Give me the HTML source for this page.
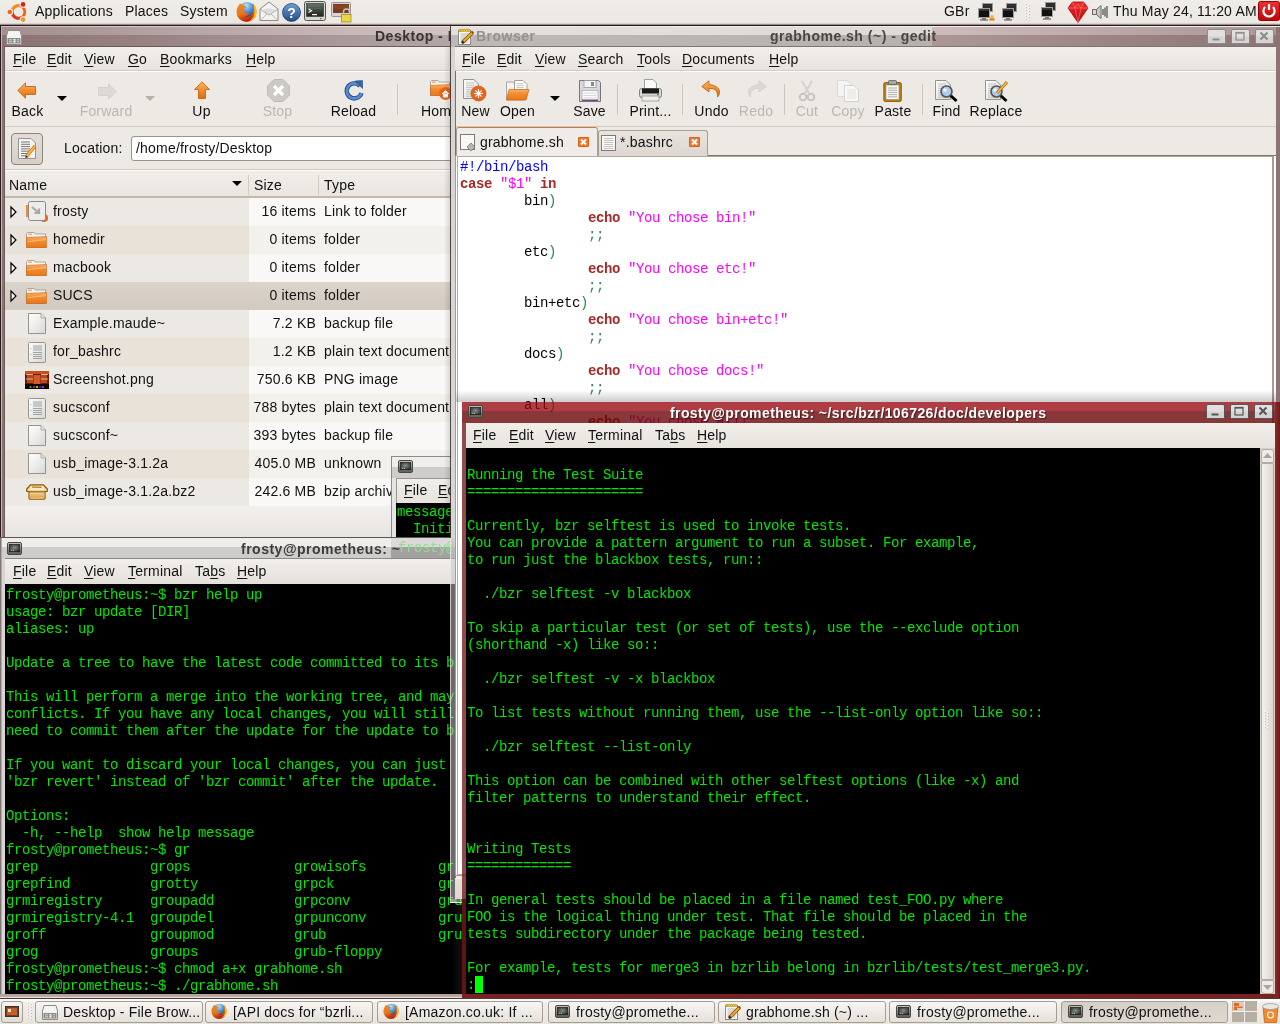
<!DOCTYPE html><html><head><meta charset="utf-8"><style>
*{margin:0;padding:0;box-sizing:border-box}
html,body{width:1280px;height:1024px;overflow:hidden;background:#efebe7;position:relative}
#root{position:absolute;left:0;top:0;width:1280px;height:1024px;will-change:transform}
.ui{font-family:"Liberation Sans",sans-serif;font-size:14px;line-height:17px;color:#111;white-space:pre;letter-spacing:0.2px}
.mono{font-family:"Liberation Mono",monospace;font-size:14px;letter-spacing:-0.4px;line-height:17px;white-space:pre}
u{text-decoration:underline;text-decoration-thickness:1px;text-underline-offset:2px}
</style></head><body><svg width="0" height="0" style="position:absolute">
<defs>
<linearGradient id="gOr" x1="0" y1="0" x2="0" y2="1"><stop offset="0" stop-color="#fbb365"/><stop offset="1" stop-color="#e46a07"/></linearGradient>
<linearGradient id="gFold" x1="0" y1="0" x2="0" y2="1"><stop offset="0" stop-color="#f9b267"/><stop offset=".45" stop-color="#f28a2b"/><stop offset="1" stop-color="#e9781a"/></linearGradient>
<linearGradient id="gGray" x1="0" y1="0" x2="0" y2="1"><stop offset="0" stop-color="#e2dfdb"/><stop offset="1" stop-color="#cfcbc6"/></linearGradient>
<linearGradient id="gPage" x1="0" y1="0" x2="1" y2="1"><stop offset="0" stop-color="#ffffff"/><stop offset="1" stop-color="#d8d8d6"/></linearGradient>
<linearGradient id="gBlue" x1="0" y1="0" x2="0" y2="1"><stop offset="0" stop-color="#729fcf"/><stop offset="1" stop-color="#204a87"/></linearGradient>
<radialGradient id="gFfBlue" cx=".45" cy=".2" r=".85"><stop offset="0" stop-color="#b8e4f8"/><stop offset=".45" stop-color="#4a8ad0"/><stop offset="1" stop-color="#061450"/></radialGradient>
<linearGradient id="gFfOr" x1="0" y1="0" x2=".3" y2="1"><stop offset="0" stop-color="#f08a20"/><stop offset=".6" stop-color="#e6761a"/><stop offset="1" stop-color="#c0200a"/></linearGradient>
<linearGradient id="gRed" x1="0" y1="0" x2="0" y2="1"><stop offset="0" stop-color="#f03030"/><stop offset="1" stop-color="#b80808"/></linearGradient>
<linearGradient id="gBtn" x1="0" y1="0" x2="0" y2="1"><stop offset="0" stop-color="#f6f4f2"/><stop offset="1" stop-color="#dcd8d2"/></linearGradient>
<linearGradient id="gBox" x1="0" y1="0" x2="0" y2="1"><stop offset="0" stop-color="#f3d39a"/><stop offset="1" stop-color="#d99a3c"/></linearGradient>
<linearGradient id="gScr" x1="0" y1="0" x2="0" y2="1"><stop offset="0" stop-color="#5e6b5c"/><stop offset="1" stop-color="#1e221e"/></linearGradient>
<linearGradient id="gBez" x1="0" y1="0" x2="0" y2="1"><stop offset="0" stop-color="#dcd8d2"/><stop offset="1" stop-color="#5a5650"/></linearGradient><radialGradient id="gScr2" cx=".5" cy=".45" r=".6"><stop offset="0" stop-color="#8a928a"/><stop offset="1" stop-color="#262a26"/></radialGradient></defs></svg><div id="root"><div style="position:absolute;left:0px;top:0px;width:1280px;height:24px;background:linear-gradient(#f0ede9,#ebe7e2);border-bottom:1px solid #d6d1ca"></div><svg style="position:absolute;left:7px;top:1px;overflow:visible" width="22" height="22" viewBox="0 0 22 22"><circle cx="11.5" cy="11" r="6.3" fill="none" stroke="#e8641e" stroke-width="2.8"/><path d="M5.2,11 A6.3,6.3 0 0 1 14.6,5.5" fill="none" stroke="#f58a1f" stroke-width="2.8"/><path d="M14.6,16.5 A6.3,6.3 0 0 1 5.2,11" fill="none" stroke="#e0321c" stroke-width="2.8"/><circle cx="2.8" cy="11" r="3.4" fill="#efebe7"/><circle cx="16" cy="3.4" r="3.4" fill="#efebe7"/><circle cx="16" cy="18.6" r="3.4" fill="#efebe7"/><circle cx="2.8" cy="11" r="2.3" fill="#f26522"/><circle cx="16" cy="3.4" r="2.3" fill="#df1f1c"/><circle cx="16" cy="18.6" r="2.3" fill="#f7941e"/></svg><div class="ui" style="position:absolute;left:35px;top:3px;">Applications</div><div class="ui" style="position:absolute;left:125px;top:3px;">Places</div><div class="ui" style="position:absolute;left:180px;top:3px;">System</div><svg style="position:absolute;left:236px;top:1px;overflow:visible" width="21" height="21" viewBox="0 0 21 21"><circle cx="11.2" cy="9.8" r="8.8" fill="url(#gFfBlue)"/><path d="M4,2.2 C2,5 .5,8 .5,11 A10,10 0 0 0 20.5,11 C20.5,7 19,4 17,2.2 C18,6 18,9 16.5,12 C15,15 12,16.5 9,15.5 C11.5,14.5 13.5,13.5 14.5,12.5 C12,13 9,12.2 8,10 C7,8 8.5,6.3 10.5,6.5 C9.8,5.2 8.8,4.6 7.4,4.9 C6.4,3.8 5.4,2.8 4,2.2Z" fill="url(#gFfOr)"/><path d="M17,2.2 C20,5 21,8.5 20.6,12 C20,16 17,19 13.5,20.2 C16.8,17.5 18.6,14.5 18.6,11 C18.6,8 18.2,5 17,2.2Z" fill="#ffc61a"/></svg><svg style="position:absolute;left:259px;top:1px;overflow:visible" width="20" height="21" viewBox="0 0 20 21"><path d="M1,8 L10,1 L19,8 L19,19.5 L1,19.5Z" fill="#f2f2f0" stroke="#8a8a88" stroke-width="1"/><path d="M1,8 L10,14 L19,8" fill="none" stroke="#a8a8a6"/><path d="M1.5,19 L8,13 M18.5,19 L12,13" stroke="#b8b8b6"/><path d="M4,9 C7,7 13,7 16,9 L10,13Z" fill="#dcdcda"/></svg><svg style="position:absolute;left:282px;top:3px;overflow:visible" width="19" height="19" viewBox="0 0 19 19"><circle cx="9.5" cy="9.5" r="9" fill="url(#gBlue)" stroke="#1f3f7a" stroke-width=".8"/><text x="9.5" y="15" text-anchor="middle" font-family="Liberation Sans" font-weight="bold" font-size="14" fill="#fff">?</text></svg><svg style="position:absolute;left:304px;top:1px;overflow:visible" width="22" height="20" viewBox="0 0 22 20"><rect x=".5" y=".5" width="21" height="19" rx="2" fill="#d6d6d2" stroke="#555753"/><rect x="2.5" y="2.5" width="17" height="13" fill="url(#gScr)" stroke="#2e3436" stroke-width=".6"/><path d="M4,3.8h13M4,5.6h13M4,7.4h13" stroke="#7e8b7a" stroke-width=".7" opacity=".6"/><path d="M4.5,8 L7.5,9.8 L4.5,11.6" fill="none" stroke="#fff" stroke-width="1.2"/><path d="M8,13.6h5" stroke="#fff" stroke-width="1.2"/><rect x="16" y="17" width="1.6" height="1.2" fill="#4e9a06"/></svg><svg style="position:absolute;left:331px;top:1px;overflow:visible" width="21" height="21" viewBox="0 0 21 21"><rect x=".5" y="1.5" width="19" height="14" rx="1" fill="#d8d6d2" stroke="#9a9894"/><rect x="2" y="3" width="16" height="9" fill="#7a3a20"/><path d="M2,5h16M2,7h16" stroke="#a85a30" stroke-width=".7"/><path d="M12.5,14 v-3 a3,3 0 0 1 6,0 v3" fill="none" stroke="#c4c4c0" stroke-width="1.4"/><rect x="10.5" y="13.5" width="9.5" height="7.5" fill="#e9d44a" stroke="#a89020" stroke-width=".8"/></svg><div class="ui" style="position:absolute;left:944px;top:3px;">GBr</div><svg style="position:absolute;left:978px;top:3px;overflow:visible" width="17" height="18" viewBox="0 0 17 18"><rect x="4.5" y=".5" width="10" height="8" fill="#2e2e2e" stroke="#9a9a9a"/><rect x=".5" y="5.5" width="11" height="9" fill="#111" stroke="#a0a0a0"/><path d="M1,7h10" stroke="#555" stroke-width="1"/><rect x="4" y="15" width="4" height="1.5" fill="#777"/><rect x="2" y="16.5" width="8" height="1" fill="#444"/><path d="M11,17.5 L14,11.5 L17,17.5Z" fill="#f57900"/><path d="M14,13.5v2" stroke="#fff" stroke-width=".9"/></svg><svg style="position:absolute;left:1002px;top:3px;overflow:visible" width="17" height="18" viewBox="0 0 17 18"><rect x="4.5" y=".5" width="10" height="8" fill="#2e2e2e" stroke="#9a9a9a"/><rect x=".5" y="5.5" width="11" height="9" fill="#111" stroke="#a0a0a0"/><path d="M1,7h10" stroke="#555" stroke-width="1"/><rect x="4" y="15" width="4" height="1.5" fill="#777"/><rect x="2" y="16.5" width="8" height="1" fill="#444"/></svg><div style="position:absolute;left:1025px;top:3px;width:1px;height:1px;background:#fff;box-shadow:1px 1px 0 #c8c2ba"></div><div style="position:absolute;left:1028px;top:4px;width:1px;height:1px;background:#fff;box-shadow:1px 1px 0 #c8c2ba"></div><div style="position:absolute;left:1025px;top:6px;width:1px;height:1px;background:#fff;box-shadow:1px 1px 0 #c8c2ba"></div><div style="position:absolute;left:1028px;top:7px;width:1px;height:1px;background:#fff;box-shadow:1px 1px 0 #c8c2ba"></div><div style="position:absolute;left:1025px;top:9px;width:1px;height:1px;background:#fff;box-shadow:1px 1px 0 #c8c2ba"></div><div style="position:absolute;left:1028px;top:10px;width:1px;height:1px;background:#fff;box-shadow:1px 1px 0 #c8c2ba"></div><div style="position:absolute;left:1025px;top:12px;width:1px;height:1px;background:#fff;box-shadow:1px 1px 0 #c8c2ba"></div><div style="position:absolute;left:1028px;top:13px;width:1px;height:1px;background:#fff;box-shadow:1px 1px 0 #c8c2ba"></div><div style="position:absolute;left:1025px;top:15px;width:1px;height:1px;background:#fff;box-shadow:1px 1px 0 #c8c2ba"></div><div style="position:absolute;left:1028px;top:16px;width:1px;height:1px;background:#fff;box-shadow:1px 1px 0 #c8c2ba"></div><div style="position:absolute;left:1025px;top:18px;width:1px;height:1px;background:#fff;box-shadow:1px 1px 0 #c8c2ba"></div><div style="position:absolute;left:1028px;top:19px;width:1px;height:1px;background:#fff;box-shadow:1px 1px 0 #c8c2ba"></div><svg style="position:absolute;left:1041px;top:2px;overflow:visible" width="17" height="18" viewBox="0 0 17 18"><rect x="4.5" y=".5" width="10" height="8" fill="#2e2e2e" stroke="#9a9a9a"/><rect x=".5" y="5.5" width="11" height="9" fill="#111" stroke="#a0a0a0"/><path d="M1,7h10" stroke="#555" stroke-width="1"/><rect x="4" y="15" width="4" height="1.5" fill="#777"/><rect x="2" y="16.5" width="8" height="1" fill="#444"/></svg><svg style="position:absolute;left:1067px;top:1px;overflow:visible" width="22" height="22" viewBox="0 0 22 22"><path d="M1,7 L5.5,1 L16.5,1 L21,7 L11,21.5Z" fill="url(#gRed)" stroke="#a00" stroke-width=".8"/><path d="M1,7 L21,7 M5.5,1 L8,7 L11,21.5 L14,7 L16.5,1 M8,7 L11,3 L14,7" fill="none" stroke="#ff8080" stroke-width=".6"/></svg><svg style="position:absolute;left:1092px;top:5px;overflow:visible" width="16" height="14" viewBox="0 0 16 14"><rect x=".5" y="4.5" width="4" height="5" fill="#d8d8d6" stroke="#6c6c6a"/><path d="M4.5,4.5 L9,.5 L9,13.5 L4.5,9.5Z" fill="#c8c8c6" stroke="#6c6c6a"/><path d="M11,4v6M13,2.5v9M15,1v12" stroke="#3c3c3a" stroke-width="1.1"/></svg><div class="ui" style="position:absolute;left:1113px;top:3px;">Thu May 24, 11:20 AM</div><svg style="position:absolute;left:1258px;top:1px;overflow:visible" width="22" height="20" viewBox="0 0 22 20"><rect x=".5" y=".5" width="21" height="19" rx="2" fill="url(#gRed)" stroke="#900"/><path d="M7,6 A5.6,5.6 0 1 0 15,6" fill="none" stroke="#fff" stroke-width="2.2"/><path d="M11,3v6" stroke="#fff" stroke-width="2.2"/></svg><div style="position:absolute;left:0px;top:24px;width:452px;height:1px;background:#9a8c88"></div><div style="position:absolute;left:0px;top:25px;width:452px;height:1px;background:#2a1c1c"></div><div style="position:absolute;left:0px;top:26px;width:452px;height:514px;background:#8c7474"></div><div style="position:absolute;left:0px;top:26px;width:1px;height:514px;background:#2a1c1c"></div><div style="position:absolute;left:1px;top:26px;width:451px;height:1px;background:linear-gradient(90deg,#d0c0c0,#e8e0e0)"></div><div style="position:absolute;left:1px;top:27px;width:1px;height:513px;background:#c8b4b4"></div><div style="position:absolute;left:2px;top:27px;width:450px;height:8px;background:linear-gradient(90deg,#a48e8e,#d2c4c4)"></div><div style="position:absolute;left:2px;top:35px;width:450px;height:12px;background:linear-gradient(90deg,#8a7272,#b4a6a6)"></div><svg style="position:absolute;left:6px;top:29px;overflow:visible" width="16" height="16" viewBox="0 0 16 16"><path d="M2,1.5 L14,1.5 L15.5,7 L15.5,15.5 L.5,15.5 L.5,7Z" fill="#f4f4f2" stroke="#8c8c8a"/><rect x="1.5" y="9" width="13" height="5.5" fill="#8a8a88"/><path d="M3,10.8h3M7.5,10.8h2M11,10.8h2M3,12.8h3M7.5,12.8h2M11,12.8h2" stroke="#d8d8d6" stroke-width="1"/><path d="M7.5,10.8h2M7.5,12.8h2" stroke="#fff" stroke-width="1.2"/></svg><div class="ui" style="position:absolute;left:375px;top:28px;font-weight:bold;color:#3c3434;letter-spacing:0.5px">Desktop - File Browser</div><div style="position:absolute;left:4px;top:46px;width:448px;height:494px;background:#edeae6;border-left:1px solid #6c5a58;border-top:1px solid #6c5a58"></div><div style="position:absolute;left:5px;top:47px;width:447px;height:24px;background:linear-gradient(#f2efeb,#e7e3de);border-bottom:1px solid #d3cdc5"></div><div class="ui" style="position:absolute;left:13px;top:51px;"><u>F</u>ile</div><div class="ui" style="position:absolute;left:47px;top:51px;"><u>E</u>dit</div><div class="ui" style="position:absolute;left:84px;top:51px;"><u>V</u>iew</div><div class="ui" style="position:absolute;left:128px;top:51px;"><u>G</u>o</div><div class="ui" style="position:absolute;left:160px;top:51px;"><u>B</u>ookmarks</div><div class="ui" style="position:absolute;left:246px;top:51px;"><u>H</u>elp</div><div style="position:absolute;left:5px;top:71px;width:447px;height:56px;background:#edeae6;border-top:1px solid #fff;border-bottom:1px solid #d0cac2"></div><svg style="position:absolute;left:17px;top:82px;overflow:visible" width="19" height="17" viewBox="0 0 19 17"><path d="M.8,8.5 L8.5,.8 L8.5,4.5 L18.5,4.5 L18.5,12.5 L8.5,12.5 L8.5,16.2Z" fill="url(#gOr)" stroke="#c25a00" stroke-width=".8"/></svg><svg style="position:absolute;left:57px;top:96px;overflow:visible" width="10" height="5" viewBox="0 0 10 5"><path d="M0,0 L10,0 L5,5Z" fill="#000"/></svg><svg style="position:absolute;left:98px;top:83px;overflow:visible" width="19" height="17" viewBox="0 0 19 17"><path d="M18.2,8.5 L10.5,.8 L10.5,4.5 L.5,4.5 L.5,12.5 L10.5,12.5 L10.5,16.2Z" fill="#dcd9d4" stroke="#d0ccc6" stroke-width=".8"/></svg><svg style="position:absolute;left:145px;top:96px;overflow:visible" width="10" height="5" viewBox="0 0 10 5"><path d="M0,0 L10,0 L5,5Z" fill="#b8b0a6"/></svg><svg style="position:absolute;left:194px;top:81px;overflow:visible" width="16" height="18" viewBox="0 0 16 18"><path d="M8,.8 L15.5,8.5 L11.5,8.5 L11.5,17.5 L4.5,17.5 L4.5,8.5 L.5,8.5Z" fill="url(#gOr)" stroke="#c25a00" stroke-width=".8"/></svg><svg style="position:absolute;left:267px;top:79px;overflow:visible" width="23" height="23" viewBox="0 0 23 23"><path d="M7,.5 L16,.5 L22.5,7 L22.5,16 L16,22.5 L7,22.5 L.5,16 L.5,7Z" fill="#cdc9c5" stroke="#bdb9b5"/><path d="M7,7 L16,16 M16,7 L7,16" stroke="#fff" stroke-width="3.2"/></svg><svg style="position:absolute;left:345px;top:80px;overflow:visible" width="19" height="21" viewBox="0 0 19 21"><path d="M15,6 A7.5,7.5 0 1 0 16.5,13" fill="none" stroke="#204a87" stroke-width="4.4"/><path d="M15,6 A7.5,7.5 0 1 0 16.5,13" fill="none" stroke="#5a8ad0" stroke-width="2.6"/><path d="M10,1 L17.5,.5 L17.5,8.5Z" fill="#3465a4" stroke="#204a87" stroke-width=".6"/></svg><svg style="position:absolute;left:430px;top:80px;overflow:visible" width="21" height="16" viewBox="0 0 21 16"><path d="M.5,1.5 L1.5,.5 L8,.5 L9,2 L19.5,2 L19.5,15.5 L.5,15.5Z" fill="#f6f4f0" stroke="#9a948c" stroke-width=".8"/><path d="M2,2.2h4" stroke="#f08a30"/><path d="M.5,5.5 L20.5,4.5 L20.5,15.5 L.5,15.5Z" fill="url(#gFold)" stroke="#c8621a" stroke-width=".6"/></svg><svg style="position:absolute;left:439px;top:87px;overflow:visible" width="13" height="13" viewBox="0 0 13 13"><circle cx="6.5" cy="6.5" r="6.5" fill="#e9641a"/><path d="M3,7 L6.5,3.5 L10,7 M4.5,6.5v3.5h4v-3.5" fill="#fff" stroke="#fff" stroke-width="1"/></svg><div class="ui" style="position:absolute;left:-32.5px;top:103px;width:120px;text-align:center;color:#111">Back</div><div class="ui" style="position:absolute;left:46px;top:103px;width:120px;text-align:center;color:#bbb6b0">Forward</div><div class="ui" style="position:absolute;left:141.5px;top:103px;width:120px;text-align:center;color:#111">Up</div><div class="ui" style="position:absolute;left:217.5px;top:103px;width:120px;text-align:center;color:#bbb6b0">Stop</div><div class="ui" style="position:absolute;left:293.5px;top:103px;width:120px;text-align:center;color:#111">Reload</div><div class="ui" style="position:absolute;left:380px;top:103px;width:120px;text-align:center;color:#111">Home</div><div style="position:absolute;left:397px;top:84px;width:1px;height:31px;background:#cdc6bd"></div><div style="position:absolute;left:5px;top:127px;width:447px;height:43px;background:#edeae6;border-bottom:1px solid #cfc8c0"></div><div style="position:absolute;left:11px;top:133px;width:32px;height:32px;background:linear-gradient(#e2ddd6,#d6d0c8);border:1px solid #8e847a;border-radius:4px"></div><svg style="position:absolute;left:18px;top:138px;overflow:visible" width="19" height="22" viewBox="0 0 19 22"><path d="M.5,.5 L13,.5 L17.5,5 L17.5,20.5 L.5,20.5Z" fill="#f4f4f2" stroke="#8a8a88" stroke-width=".9"/><path d="M3,4.0h9" stroke="#6a6a68" stroke-width=".9"/><path d="M3,6.3h9" stroke="#6a6a68" stroke-width=".9"/><path d="M3,8.6h9" stroke="#6a6a68" stroke-width=".9"/><path d="M3,10.899999999999999h9" stroke="#6a6a68" stroke-width=".9"/><path d="M3,13.2h9" stroke="#6a6a68" stroke-width=".9"/><path d="M3,15.5h6" stroke="#6a6a68" stroke-width=".9"/><path d="M3,17.799999999999997h6" stroke="#6a6a68" stroke-width=".9"/><path d="M8,19 L17,8" stroke="#c26a00" stroke-width="3.4"/><path d="M8,19 L17,8" stroke="#fcb045" stroke-width="2"/><path d="M7,20.5 L8.3,17.5 L9.8,18.8Z" fill="#222"/></svg><div class="ui" style="position:absolute;left:64px;top:140px;">Location:</div><div style="position:absolute;left:131px;top:136px;width:330px;height:25px;background:#fff;border:1px solid #9d9489;border-radius:3px"></div><div class="ui" style="position:absolute;left:136px;top:140px;">/home/frosty/Desktop</div><div style="position:absolute;left:5px;top:170px;width:447px;height:368px;background:linear-gradient(#f9f8f6 0,#f9f8f6 85%,#e8e4e0 100%)"></div><div style="position:absolute;left:5px;top:170px;width:447px;height:1px;background:#fff"></div><div style="position:absolute;left:5px;top:171px;width:447px;height:27px;background:linear-gradient(#f1eeea,#e9e5e0);border-bottom:2px solid #c2b8ae"></div><div class="ui" style="position:absolute;left:9px;top:177px;">Name</div><div class="ui" style="position:absolute;left:254px;top:177px;">Size</div><div class="ui" style="position:absolute;left:324px;top:177px;">Type</div><svg style="position:absolute;left:232px;top:181px;overflow:visible" width="10" height="5" viewBox="0 0 10 5"><path d="M0,0 L10,0 L5,5Z" fill="#000"/></svg><div style="position:absolute;left:248px;top:175px;width:1px;height:20px;background:#d2cbc2"></div><div style="position:absolute;left:318px;top:175px;width:1px;height:20px;background:#d2cbc2"></div><div style="position:absolute;left:5px;top:198px;width:244px;height:28px;background:#ece9e4"></div><div style="position:absolute;left:249px;top:198px;width:203px;height:28px;background:#f9f8f6"></div><svg style="position:absolute;left:10px;top:206px;overflow:visible" width="7" height="12" viewBox="0 0 7 12"><path d="M1,1 L6,6 L1,11Z" fill="#fff" stroke="#000" stroke-width="1.2" stroke-linejoin="miter"/></svg><svg style="position:absolute;left:26px;top:201px;overflow:visible" width="22" height="22" viewBox="0 0 22 22"><circle cx="18" cy="17" r="4" fill="#e9641a"/><rect x="0" y="4" width="4" height="12" fill="#f08a30"/><rect x="2.5" y=".5" width="17" height="19" rx="2" fill="#ececea" stroke="#8a8a88"/><path d="M6,6 L13,12 M13,7.5 L13,12 L8.5,12" fill="none" stroke="#a8a8a6" stroke-width="2.2"/></svg><div class="ui" style="position:absolute;left:53px;top:203px;">frosty</div><div class="ui" style="position:absolute;left:216px;top:203px;width:100px;text-align:right">16 items</div><div class="ui" style="position:absolute;left:324px;top:203px;">Link to folder</div><div style="position:absolute;left:5px;top:226px;width:244px;height:28px;background:#e8e2d9"></div><div style="position:absolute;left:249px;top:226px;width:203px;height:28px;background:#f3f1ec"></div><svg style="position:absolute;left:10px;top:234px;overflow:visible" width="7" height="12" viewBox="0 0 7 12"><path d="M1,1 L6,6 L1,11Z" fill="#fff" stroke="#000" stroke-width="1.2" stroke-linejoin="miter"/></svg><svg style="position:absolute;left:26px;top:232px;overflow:visible" width="21" height="16" viewBox="0 0 21 16"><path d="M.5,1.5 L1.5,.5 L8,.5 L9,2 L19.5,2 L19.5,15.5 L.5,15.5Z" fill="#f6f4f0" stroke="#9a948c" stroke-width=".8"/><path d="M2,2.2h4" stroke="#f08a30" stroke-width="1"/><path d="M.5,5.5 L20.5,4.5 L20.5,15.5 L.5,15.5Z" fill="url(#gFold)" stroke="#c8621a" stroke-width=".6"/><path d="M1.5,10 C7,8.5 14,8.5 20,7.5" stroke="#fbc890" stroke-width=".8" fill="none"/></svg><div class="ui" style="position:absolute;left:53px;top:231px;">homedir</div><div class="ui" style="position:absolute;left:216px;top:231px;width:100px;text-align:right">0 items</div><div class="ui" style="position:absolute;left:324px;top:231px;">folder</div><div style="position:absolute;left:5px;top:254px;width:244px;height:28px;background:#ece9e4"></div><div style="position:absolute;left:249px;top:254px;width:203px;height:28px;background:#f9f8f6"></div><svg style="position:absolute;left:10px;top:262px;overflow:visible" width="7" height="12" viewBox="0 0 7 12"><path d="M1,1 L6,6 L1,11Z" fill="#fff" stroke="#000" stroke-width="1.2" stroke-linejoin="miter"/></svg><svg style="position:absolute;left:26px;top:260px;overflow:visible" width="21" height="16" viewBox="0 0 21 16"><path d="M.5,1.5 L1.5,.5 L8,.5 L9,2 L19.5,2 L19.5,15.5 L.5,15.5Z" fill="#f6f4f0" stroke="#9a948c" stroke-width=".8"/><path d="M2,2.2h4" stroke="#f08a30" stroke-width="1"/><path d="M.5,5.5 L20.5,4.5 L20.5,15.5 L.5,15.5Z" fill="url(#gFold)" stroke="#c8621a" stroke-width=".6"/><path d="M1.5,10 C7,8.5 14,8.5 20,7.5" stroke="#fbc890" stroke-width=".8" fill="none"/></svg><div class="ui" style="position:absolute;left:53px;top:259px;">macbook</div><div class="ui" style="position:absolute;left:216px;top:259px;width:100px;text-align:right">0 items</div><div class="ui" style="position:absolute;left:324px;top:259px;">folder</div><div style="position:absolute;left:5px;top:282px;width:447px;height:28px;background:linear-gradient(#dbd4cb,#d2cac0)"></div><svg style="position:absolute;left:10px;top:290px;overflow:visible" width="7" height="12" viewBox="0 0 7 12"><path d="M1,1 L6,6 L1,11Z" fill="#fff" stroke="#000" stroke-width="1.2" stroke-linejoin="miter"/></svg><svg style="position:absolute;left:26px;top:288px;overflow:visible" width="21" height="16" viewBox="0 0 21 16"><path d="M.5,1.5 L1.5,.5 L8,.5 L9,2 L19.5,2 L19.5,15.5 L.5,15.5Z" fill="#f6f4f0" stroke="#9a948c" stroke-width=".8"/><path d="M2,2.2h4" stroke="#f08a30" stroke-width="1"/><path d="M.5,5.5 L20.5,4.5 L20.5,15.5 L.5,15.5Z" fill="url(#gFold)" stroke="#c8621a" stroke-width=".6"/><path d="M1.5,10 C7,8.5 14,8.5 20,7.5" stroke="#fbc890" stroke-width=".8" fill="none"/></svg><div class="ui" style="position:absolute;left:53px;top:287px;">SUCS</div><div class="ui" style="position:absolute;left:216px;top:287px;width:100px;text-align:right">0 items</div><div class="ui" style="position:absolute;left:324px;top:287px;">folder</div><div style="position:absolute;left:5px;top:310px;width:244px;height:28px;background:#ece9e4"></div><div style="position:absolute;left:249px;top:310px;width:203px;height:28px;background:#f9f8f6"></div><svg style="position:absolute;left:28px;top:313px;overflow:visible" width="18" height="21" viewBox="0 0 18 21"><path d="M.5,.5 L13,.5 L17.5,5 L17.5,20.5 L.5,20.5Z" fill="url(#gPage)" stroke="#8a8a88" stroke-width=".9"/><path d="M13,.5 L13,5 L17.5,5" fill="#e0e0de" stroke="#9a9a98" stroke-width=".7"/></svg><div class="ui" style="position:absolute;left:53px;top:315px;">Example.maude~</div><div class="ui" style="position:absolute;left:216px;top:315px;width:100px;text-align:right">7.2 KB</div><div class="ui" style="position:absolute;left:324px;top:315px;">backup file</div><div style="position:absolute;left:5px;top:338px;width:244px;height:28px;background:#e8e2d9"></div><div style="position:absolute;left:249px;top:338px;width:203px;height:28px;background:#f3f1ec"></div><svg style="position:absolute;left:28px;top:342px;overflow:visible" width="18" height="21" viewBox="0 0 18 21"><rect x=".5" y=".5" width="17" height="20" rx="1" fill="url(#gPage)" stroke="#8a8a88" stroke-width=".9"/><path d="M5,4h9" stroke="#a0a09e" stroke-width="1"/><path d="M5,6h9" stroke="#a0a09e" stroke-width="1"/><path d="M5,8h9" stroke="#a0a09e" stroke-width="1"/><path d="M5,10.5h9" stroke="#a0a09e" stroke-width="1"/><path d="M5,12.5h9" stroke="#a0a09e" stroke-width="1"/><path d="M5,14.5h9" stroke="#a0a09e" stroke-width="1"/><path d="M5,16.5h9" stroke="#a0a09e" stroke-width="1"/><rect x="2.5" y="6" width="1" height="1" fill="#b0b0ae"/><rect x="2.5" y="12" width="1" height="1" fill="#b0b0ae"/></svg><div class="ui" style="position:absolute;left:53px;top:343px;">for_bashrc</div><div class="ui" style="position:absolute;left:216px;top:343px;width:100px;text-align:right">1.2 KB</div><div class="ui" style="position:absolute;left:324px;top:343px;">plain text document</div><div style="position:absolute;left:5px;top:366px;width:244px;height:28px;background:#ece9e4"></div><div style="position:absolute;left:249px;top:366px;width:203px;height:28px;background:#f9f8f6"></div><svg style="position:absolute;left:25px;top:371px;overflow:visible" width="24" height="18" viewBox="0 0 24 18"><rect x="0" y="0" width="24" height="18" fill="#6a1a08"/><rect x="0" y="0" width="24" height="3" fill="#c85020"/><rect x="2" y="3" width="6" height="9" fill="#b84818"/><rect x="16" y="3" width="6" height="9" fill="#b84818"/><path d="M1,3.5h7M16,3.5h7M1,8h7M16,8h7" stroke="#f0d0b0" stroke-width=".8"/><rect x="8.5" y="4" width="7" height="9" fill="#d05a28"/><rect x="0" y="13" width="24" height="5" fill="#100400"/><circle cx="5.5" cy="16" r="1" fill="#3c3"/><circle cx="9" cy="16" r="1" fill="#c3c"/><circle cx="12" cy="16" r="1" fill="#ee3"/><circle cx="15" cy="16" r="1" fill="#33e"/><circle cx="18" cy="16" r="1" fill="#e3e"/></svg><div class="ui" style="position:absolute;left:53px;top:371px;">Screenshot.png</div><div class="ui" style="position:absolute;left:216px;top:371px;width:100px;text-align:right">750.6 KB</div><div class="ui" style="position:absolute;left:324px;top:371px;">PNG image</div><div style="position:absolute;left:5px;top:394px;width:244px;height:28px;background:#e8e2d9"></div><div style="position:absolute;left:249px;top:394px;width:203px;height:28px;background:#f3f1ec"></div><svg style="position:absolute;left:28px;top:398px;overflow:visible" width="18" height="21" viewBox="0 0 18 21"><rect x=".5" y=".5" width="17" height="20" rx="1" fill="url(#gPage)" stroke="#8a8a88" stroke-width=".9"/><path d="M5,4h9" stroke="#a0a09e" stroke-width="1"/><path d="M5,6h9" stroke="#a0a09e" stroke-width="1"/><path d="M5,8h9" stroke="#a0a09e" stroke-width="1"/><path d="M5,10.5h9" stroke="#a0a09e" stroke-width="1"/><path d="M5,12.5h9" stroke="#a0a09e" stroke-width="1"/><path d="M5,14.5h9" stroke="#a0a09e" stroke-width="1"/><path d="M5,16.5h9" stroke="#a0a09e" stroke-width="1"/><rect x="2.5" y="6" width="1" height="1" fill="#b0b0ae"/><rect x="2.5" y="12" width="1" height="1" fill="#b0b0ae"/></svg><div class="ui" style="position:absolute;left:53px;top:399px;">sucsconf</div><div class="ui" style="position:absolute;left:216px;top:399px;width:100px;text-align:right">788 bytes</div><div class="ui" style="position:absolute;left:324px;top:399px;">plain text document</div><div style="position:absolute;left:5px;top:422px;width:244px;height:28px;background:#ece9e4"></div><div style="position:absolute;left:249px;top:422px;width:203px;height:28px;background:#f9f8f6"></div><svg style="position:absolute;left:28px;top:425px;overflow:visible" width="18" height="21" viewBox="0 0 18 21"><path d="M.5,.5 L13,.5 L17.5,5 L17.5,20.5 L.5,20.5Z" fill="url(#gPage)" stroke="#8a8a88" stroke-width=".9"/><path d="M13,.5 L13,5 L17.5,5" fill="#e0e0de" stroke="#9a9a98" stroke-width=".7"/></svg><div class="ui" style="position:absolute;left:53px;top:427px;">sucsconf~</div><div class="ui" style="position:absolute;left:216px;top:427px;width:100px;text-align:right">393 bytes</div><div class="ui" style="position:absolute;left:324px;top:427px;">backup file</div><div style="position:absolute;left:5px;top:450px;width:244px;height:28px;background:#e8e2d9"></div><div style="position:absolute;left:249px;top:450px;width:203px;height:28px;background:#f3f1ec"></div><svg style="position:absolute;left:28px;top:453px;overflow:visible" width="18" height="21" viewBox="0 0 18 21"><path d="M.5,.5 L13,.5 L17.5,5 L17.5,20.5 L.5,20.5Z" fill="url(#gPage)" stroke="#8a8a88" stroke-width=".9"/><path d="M13,.5 L13,5 L17.5,5" fill="#e0e0de" stroke="#9a9a98" stroke-width=".7"/></svg><div class="ui" style="position:absolute;left:53px;top:455px;">usb_image-3.1.2a</div><div class="ui" style="position:absolute;left:216px;top:455px;width:100px;text-align:right">405.0 MB</div><div class="ui" style="position:absolute;left:324px;top:455px;">unknown</div><div style="position:absolute;left:5px;top:478px;width:244px;height:28px;background:#ece9e4"></div><div style="position:absolute;left:249px;top:478px;width:203px;height:28px;background:#f9f8f6"></div><svg style="position:absolute;left:26px;top:484px;overflow:visible" width="22" height="17" viewBox="0 0 22 17"><path d="M4.5,.8 L17.5,.8 L21.3,5 L21.3,7.5 L19,7.5 L19,14.3 Q19,15.2 18,15.2 L4,15.2 Q3,15.2 3,14.3 L3,7.5 L.7,7.5 L.7,5Z" fill="#f2d39e" stroke="#8f5902" stroke-width="1.2" stroke-linejoin="round"/><path d="M5,2.3 L17,2.3 L18.5,6 L3.5,6Z" fill="#fbebc8"/><path d="M6,3.2 Q11,2.8 15.5,3.4" stroke="#b8741a" stroke-width="1.3" fill="none"/><rect x="3.7" y="8.2" width="14.6" height="6.3" fill="url(#gBox)"/><path d="M3,7.8 L19,7.8" stroke="#8f5902" stroke-width="1.1"/><path d="M4.5,14h13" stroke="#f8e4c0" stroke-width=".7"/></svg><div class="ui" style="position:absolute;left:53px;top:483px;">usb_image-3.1.2a.bz2</div><div class="ui" style="position:absolute;left:216px;top:483px;width:100px;text-align:right">242.6 MB</div><div class="ui" style="position:absolute;left:324px;top:483px;">bzip archive</div><div style="position:absolute;left:5px;top:537px;width:447px;height:3px;background:#cfc8c0"></div><div style="position:absolute;left:391px;top:456px;width:61px;height:82px;background:#e6e4e2;border-left:1px solid #8a8a88;border-top:1px solid #8a8a88"></div><div style="position:absolute;left:392px;top:457px;width:60px;height:10px;background:#f0eeec"></div><div style="position:absolute;left:392px;top:467px;width:60px;height:11px;background:#cfcdcb"></div><svg style="position:absolute;left:398px;top:460px;overflow:visible" width="15" height="13" viewBox="0 0 15 13"><rect x=".5" y=".5" width="14" height="12" rx="1.5" fill="url(#gBez)" stroke="#4a4844"/><rect x="2.2" y="2.2" width="10.6" height="7.6" fill="url(#gScr2)" stroke="#141614" stroke-width=".6"/><path d="M3.5,8.2h2M6,8.5h1" stroke="#c8ccc8" stroke-width=".9"/></svg><div style="position:absolute;left:396px;top:478px;width:56px;height:25px;background:linear-gradient(#f2efeb,#e6e2dc);border-left:1px solid #9a9692;border-top:1px solid #9a9692"></div><div class="ui" style="position:absolute;left:404px;top:482px;"><u>F</u>ile</div><div class="ui" style="position:absolute;left:438px;top:482px;"><u>E</u>dit</div><div style="position:absolute;left:396px;top:503px;width:56px;height:35px;background:#000"></div><div class="mono" style="position:absolute;left:397px;top:504px;color:#00e800">message
  Initi</div><div style="position:absolute;left:0px;top:537px;width:462px;height:1px;background:#5a5654"></div><div style="position:absolute;left:0px;top:538px;width:462px;height:460px;background:#d8d6d4"></div><div style="position:absolute;left:0px;top:538px;width:2px;height:460px;background:linear-gradient(90deg,#6c5c5a,#c8c0bc)"></div><div style="position:absolute;left:2px;top:538px;width:460px;height:9px;background:#efedeb"></div><div style="position:absolute;left:2px;top:547px;width:460px;height:11px;background:#cfcdcb"></div><div style="position:absolute;left:391px;top:538px;width:71px;height:9px;background:#dcdad8"></div><div style="position:absolute;left:391px;top:547px;width:71px;height:11px;background:#a4a2a0"></div><div class="mono" style="position:absolute;left:398px;top:540px;color:#90dc90">frosty@</div><svg style="position:absolute;left:7px;top:542px;overflow:visible" width="15" height="13" viewBox="0 0 15 13"><rect x=".5" y=".5" width="14" height="12" rx="1.5" fill="url(#gBez)" stroke="#4a4844"/><rect x="2.2" y="2.2" width="10.6" height="7.6" fill="url(#gScr2)" stroke="#141614" stroke-width=".6"/><path d="M3.5,8.2h2M6,8.5h1" stroke="#c8ccc8" stroke-width=".9"/></svg><div class="ui" style="position:absolute;left:241px;top:541px;font-weight:bold;color:#3c3c3c;letter-spacing:0.5px">frosty@prometheus: ~</div><div style="position:absolute;left:5px;top:558px;width:457px;height:1px;background:#8a8886"></div><div style="position:absolute;left:5px;top:559px;width:457px;height:25px;background:linear-gradient(#f2efeb,#e4e0da)"></div><div class="ui" style="position:absolute;left:13px;top:563px;"><u>F</u>ile</div><div class="ui" style="position:absolute;left:47px;top:563px;"><u>E</u>dit</div><div class="ui" style="position:absolute;left:84px;top:563px;"><u>V</u>iew</div><div class="ui" style="position:absolute;left:128px;top:563px;"><u>T</u>erminal</div><div class="ui" style="position:absolute;left:195px;top:563px;">Ta<u>b</u>s</div><div class="ui" style="position:absolute;left:237px;top:563px;"><u>H</u>elp</div><div style="position:absolute;left:5px;top:584px;width:461px;height:410px;background:#000"></div><div style="position:absolute;left:452px;top:903px;width:10px;height:91px;background:linear-gradient(90deg,rgba(30,30,30,0),rgba(30,30,30,.6))"></div><div class="mono" style="position:absolute;left:6px;top:587px;width:456px;height:408px;overflow:hidden;color:#00e800">frosty@prometheus:~$ bzr help up
usage: bzr update [DIR]
aliases: up

Update a tree to have the latest code committed to its branch.

This will perform a merge into the working tree, and may generate
conflicts. If you have any local changes, you will still
need to commit them after the update for the update to be

If you want to discard your local changes, you can just do a
&#x27;bzr revert&#x27; instead of &#x27;bzr commit&#x27; after the update.

Options:
  -h, --help  show help message
frosty@prometheus:~$ gr
grep              grops             growisofs         grub-install
grepfind          grotty            grpck             grub-md5
grmiregistry      groupadd          grpconv           grub-setup
grmiregistry-4.1  groupdel          grpunconv         grub-terminfo
groff             groupmod          grub              grub-uninstall
grog              groups            grub-floppy
frosty@prometheus:~$ chmod a+x grabhome.sh
frosty@prometheus:~$ ./grabhome.sh</div><div style="position:absolute;left:0px;top:994px;width:462px;height:3px;background:linear-gradient(#b09890,#c4b0a8)"></div><div style="position:absolute;left:0px;top:997px;width:462px;height:1px;background:#e4dcd8"></div><div style="position:absolute;left:450px;top:24px;width:830px;height:1px;background:#9a8c88"></div><div style="position:absolute;left:450px;top:25px;width:830px;height:1px;background:#2a1c1c"></div><div style="position:absolute;left:450px;top:26px;width:1px;height:512px;background:rgba(60,52,50,0.9)"></div><div style="position:absolute;left:450px;top:538px;width:1px;height:365px;background:rgba(230,230,230,0.85)"></div><div style="position:absolute;left:444px;top:47px;width:6px;height:491px;background:linear-gradient(90deg,rgba(0,0,0,0),rgba(0,0,0,0.12))"></div><div style="position:absolute;left:451px;top:26px;width:4px;height:512px;background:#d8d6d4"></div><div style="position:absolute;left:451px;top:538px;width:4px;height:365px;background:rgba(200,196,194,0.55)"></div><div style="position:absolute;left:450px;top:899px;width:12px;height:4px;background:rgba(200,196,194,0.55)"></div><div style="position:absolute;left:450px;top:902px;width:12px;height:1px;background:rgba(255,255,255,0.8)"></div><div style="position:absolute;left:451px;top:26px;width:829px;height:1px;background:#f0eceb"></div><div style="position:absolute;left:451px;top:27px;width:829px;height:8px;background:linear-gradient(90deg,#e2dfdc 0,#dedad7 58%,#cdbcba 58%,#ab9595 100%)"></div><div style="position:absolute;left:451px;top:35px;width:829px;height:12px;background:linear-gradient(90deg,#bdb9b6 0,#b6b1ae 58%,#ab9896 58%,#8c7474 100%)"></div><svg style="position:absolute;left:457px;top:28px;overflow:visible" width="16" height="17" viewBox="0 0 16 17"><rect x="1.5" y="2.5" width="12" height="14" fill="#fbfbf9" stroke="#8a8a88"/><circle cx="3.0" cy="2.5" r="1.2" fill="#f4d040" stroke="#a88010" stroke-width=".6"/><circle cx="5.2" cy="2.5" r="1.2" fill="#f4d040" stroke="#a88010" stroke-width=".6"/><circle cx="7.4" cy="2.5" r="1.2" fill="#f4d040" stroke="#a88010" stroke-width=".6"/><circle cx="9.600000000000001" cy="2.5" r="1.2" fill="#f4d040" stroke="#a88010" stroke-width=".6"/><circle cx="11.8" cy="2.5" r="1.2" fill="#f4d040" stroke="#a88010" stroke-width=".6"/><path d="M3.5,6h8" stroke="#9a9a98" stroke-width=".7"/><path d="M3.5,8h8" stroke="#9a9a98" stroke-width=".7"/><path d="M3.5,10h8" stroke="#9a9a98" stroke-width=".7"/><path d="M3.5,12h8" stroke="#9a9a98" stroke-width=".7"/><path d="M3.5,14h8" stroke="#9a9a98" stroke-width=".7"/><path d="M6,14 L15,5" stroke="#7a4a08" stroke-width="3.6" stroke-linecap="round"/><path d="M6.3,13.7 L15,5" stroke="#f5a828" stroke-width="2.2"/><path d="M4.6,15.6 L5.6,12.6 L7.5,14.4Z" fill="#222"/></svg><div class="ui" style="position:absolute;left:476px;top:28px;font-weight:bold;color:#94908c;letter-spacing:0.5px">Browser</div><div class="ui" style="position:absolute;left:770px;top:28px;font-weight:bold;color:#4a4644;letter-spacing:0.5px">grabhome.sh (~) - gedit</div><svg style="position:absolute;left:1207px;top:29px;overflow:visible" width="19" height="15" viewBox="0 0 19 15"><rect x=".5" y=".5" width="18" height="14" rx="1.5" fill="#e2e0de" stroke="#8c8a88"/><rect x="1" y="7.5" width="17" height="6.5" fill="#d6d4d2"/><rect x="5.5" y="9.5" width="7" height="2" fill="#8a8a8a"/></svg><svg style="position:absolute;left:1231px;top:29px;overflow:visible" width="19" height="15" viewBox="0 0 19 15"><rect x=".5" y=".5" width="18" height="14" rx="1.5" fill="#e2e0de" stroke="#8c8a88"/><rect x="1" y="7.5" width="17" height="6.5" fill="#d6d4d2"/><rect x="5" y="3.5" width="8" height="7.5" fill="none" stroke="#8a8a8a" stroke-width="1.2"/><rect x="5" y="3" width="8" height="1.6" fill="#8a8a8a"/></svg><svg style="position:absolute;left:1255px;top:29px;overflow:visible" width="19" height="15" viewBox="0 0 19 15"><rect x=".5" y=".5" width="18" height="14" rx="1.5" fill="#e2e0de" stroke="#8c8a88"/><rect x="1" y="7.5" width="17" height="6.5" fill="#d6d4d2"/><path d="M5.5,3.5 L12.5,10.5 M12.5,3.5 L5.5,10.5" stroke="#8a8a8a" stroke-width="2"/></svg><div style="position:absolute;left:1276px;top:27px;width:4px;height:380px;background:#8c7474"></div><div style="position:absolute;left:455px;top:46px;width:821px;height:853px;background:#edeae6;border-left:1px solid #7c7066;border-top:1px solid #7c7472"></div><div style="position:absolute;left:455px;top:878px;width:821px;height:21px;background:linear-gradient(#e4e0da,#dcd7d0);border-top:1px solid #f8f6f4"></div><div style="position:absolute;left:455px;top:47px;width:821px;height:24px;background:linear-gradient(#f2efeb,#e7e3de);border-bottom:1px solid #d3cdc5"></div><div class="ui" style="position:absolute;left:462px;top:51px;"><u>F</u>ile</div><div class="ui" style="position:absolute;left:497px;top:51px;"><u>E</u>dit</div><div class="ui" style="position:absolute;left:535px;top:51px;"><u>V</u>iew</div><div class="ui" style="position:absolute;left:578px;top:51px;"><u>S</u>earch</div><div class="ui" style="position:absolute;left:637px;top:51px;"><u>T</u>ools</div><div class="ui" style="position:absolute;left:682px;top:51px;"><u>D</u>ocuments</div><div class="ui" style="position:absolute;left:769px;top:51px;"><u>H</u>elp</div><div style="position:absolute;left:456px;top:71px;width:820px;height:56px;background:#edeae6;border-top:1px solid #fff;border-bottom:1px solid #d0cac2"></div><svg style="position:absolute;left:463px;top:79px;overflow:visible" width="23" height="22" viewBox="0 0 23 22"><path d="M.5,.5 L11,.5 L15.5,5 L15.5,19.5 L.5,19.5Z" fill="url(#gPage)" stroke="#8a8a88" stroke-width=".9"/><path d="M3,4.0h8" stroke="#b0b0ae" stroke-width=".7"/><path d="M3,6.2h8" stroke="#b0b0ae" stroke-width=".7"/><path d="M3,8.4h8" stroke="#b0b0ae" stroke-width=".7"/><path d="M3,10.600000000000001h8" stroke="#b0b0ae" stroke-width=".7"/><path d="M3,12.8h8" stroke="#b0b0ae" stroke-width=".7"/><path d="M3,15.0h8" stroke="#b0b0ae" stroke-width=".7"/><path d="M3,17.200000000000003h8" stroke="#b0b0ae" stroke-width=".7"/><circle cx="15.5" cy="14.5" r="7.5" fill="#e9641a" stroke="#c04a08" stroke-width=".6"/><path d="M15.5,10v9M11,14.5h9M12.3,11.3l6.4,6.4M18.7,11.3l-6.4,6.4" stroke="#fff" stroke-width="1.1"/><circle cx="15.5" cy="14.5" r="2" fill="#fff"/></svg><svg style="position:absolute;left:506px;top:80px;overflow:visible" width="24" height="21" viewBox="0 0 24 21"><path d="M.5,2 L7,2 L8,3.5 L18,3.5 L18,20 L.5,20Z" fill="#f6f4f0" stroke="#9a948c" stroke-width=".8"/><path d="M8.5,.5 L17,.5 L21,4.5 L21,14 L8.5,14Z" fill="#fafaf8" stroke="#8a8a88" stroke-width=".8"/><path d="M10.5,3.5h7" stroke="#b0b0ae" stroke-width=".7"/><path d="M10.5,5.5h7" stroke="#b0b0ae" stroke-width=".7"/><path d="M10.5,7.5h7" stroke="#b0b0ae" stroke-width=".7"/><path d="M10.5,9.5h7" stroke="#b0b0ae" stroke-width=".7"/><path d="M.5,20 L3,9.5 L23,9.5 L20,20Z" fill="url(#gFold)" stroke="#c8621a" stroke-width=".7"/></svg><svg style="position:absolute;left:550px;top:96px;overflow:visible" width="10" height="5" viewBox="0 0 10 5"><path d="M0,0 L10,0 L5,5Z" fill="#000"/></svg><svg style="position:absolute;left:579px;top:80px;overflow:visible" width="22" height="22" viewBox="0 0 22 22"><path d="M.5,.5 L19.5,.5 L21.5,2.5 L21.5,21.5 L.5,21.5Z" fill="#d8d8de" stroke="#6a6a70" stroke-width=".9"/><rect x="5" y=".5" width="12" height="7" fill="#f2f2f4" stroke="#8a8a90" stroke-width=".7"/><rect x="12" y="2" width="3" height="4" fill="#8a8a90"/><rect x="3" y="10.5" width="16" height="10" fill="#fafafa" stroke="#9a9aa0" stroke-width=".6"/><path d="M4.5,13h13M4.5,15.5h13M4.5,18h13" stroke="#c8c8cc" stroke-width=".7"/><rect x="3" y="19.5" width="16" height="1.6" fill="#75507b"/></svg><svg style="position:absolute;left:639px;top:79px;overflow:visible" width="23" height="23" viewBox="0 0 23 23"><path d="M5.5,.5 L14,.5 L17.5,4 L17.5,10 L5.5,10Z" fill="#fafaf8" stroke="#8a8a88" stroke-width=".8"/><rect x=".5" y="9.5" width="22" height="9" rx="2" fill="#d8d8d6" stroke="#6a6a68" stroke-width=".8"/><rect x="3" y="9.5" width="17" height="5" fill="#1a1a1a"/><rect x="3" y="17" width="17" height="5" fill="#eeeeec" stroke="#8a8a88" stroke-width=".7"/><rect x="18" y="15" width="2" height="1.2" fill="#4e9a06"/></svg><svg style="position:absolute;left:701px;top:80px;overflow:visible" width="21" height="20" viewBox="0 0 21 20"><path d="M8,.8 L.8,6.5 L8,12 L8,8.5 C13,8 17,10 16.5,17 C19.5,14 21,6 8,4.5Z" fill="url(#gOr)" stroke="#c25a00" stroke-width=".8"/></svg><svg style="position:absolute;left:746px;top:80px;overflow:visible" width="21" height="20" viewBox="0 0 21 20"><path d="M13,.8 L20.2,6.5 L13,12 L13,8.5 C8,8 4,10 4.5,17 C1.5,14 0,6 13,4.5Z" fill="#dcd9d4" stroke="#d0ccc6" stroke-width=".8"/></svg><svg style="position:absolute;left:798px;top:80px;overflow:visible" width="18" height="21" viewBox="0 0 18 21"><path d="M4,1 L11,13 M14,1 L7,13" stroke="#d4d2ce" stroke-width="2"/><circle cx="5" cy="17" r="3.3" fill="none" stroke="#c8c4c0" stroke-width="2"/><circle cx="13" cy="17" r="3.3" fill="none" stroke="#c8c4c0" stroke-width="2"/></svg><svg style="position:absolute;left:837px;top:80px;overflow:visible" width="22" height="22" viewBox="0 0 22 22"><path d="M.5,.5 L10,.5 L13.5,4 L13.5,16.5 L.5,16.5Z" fill="#f4f4f2" stroke="#d8d6d2" stroke-width=".9"/><path d="M7.5,5.5 L17,5.5 L21.5,10 L21.5,21.5 L7.5,21.5Z" fill="#f8f8f6" stroke="#d0ceca" stroke-width=".9"/><path d="M10,10h9" stroke="#dcdad6" stroke-width=".7"/><path d="M10,12h9" stroke="#dcdad6" stroke-width=".7"/><path d="M10,14h9" stroke="#dcdad6" stroke-width=".7"/><path d="M10,16h9" stroke="#dcdad6" stroke-width=".7"/><path d="M10,18h9" stroke="#dcdad6" stroke-width=".7"/></svg><svg style="position:absolute;left:883px;top:80px;overflow:visible" width="19" height="22" viewBox="0 0 19 22"><rect x=".8" y="2.5" width="17.5" height="19" rx="1.5" fill="#c17d11" stroke="#8f5902" stroke-width=".9"/><rect x="3" y="5" width="13" height="14.5" fill="#f8f8f6" stroke="#8a8a88" stroke-width=".6"/><path d="M5,8.0h9" stroke="#9a9a98" stroke-width=".8"/><path d="M5,10.2h9" stroke="#9a9a98" stroke-width=".8"/><path d="M5,12.4h9" stroke="#9a9a98" stroke-width=".8"/><path d="M5,14.600000000000001h9" stroke="#9a9a98" stroke-width=".8"/><path d="M5,16.8h9" stroke="#9a9a98" stroke-width=".8"/><rect x="5.5" y=".5" width="8" height="4" rx="1" fill="#a8a8a6" stroke="#555" stroke-width=".7"/></svg><svg style="position:absolute;left:935px;top:80px;overflow:visible" width="23" height="22" viewBox="0 0 23 22"><path d="M.5,.5 L11,.5 L15.5,5 L15.5,19.5 L.5,19.5Z" fill="url(#gPage)" stroke="#8a8a88" stroke-width=".9"/><path d="M3,4.0h8" stroke="#b0b0ae" stroke-width=".7"/><path d="M3,6.2h8" stroke="#b0b0ae" stroke-width=".7"/><path d="M3,8.4h8" stroke="#b0b0ae" stroke-width=".7"/><path d="M3,10.600000000000001h8" stroke="#b0b0ae" stroke-width=".7"/><path d="M3,12.8h8" stroke="#b0b0ae" stroke-width=".7"/><path d="M3,15.0h8" stroke="#b0b0ae" stroke-width=".7"/><path d="M3,17.200000000000003h8" stroke="#b0b0ae" stroke-width=".7"/><path d="M15,15 L21.5,21" stroke="#000" stroke-width="3"/><circle cx="11.5" cy="11.5" r="5.5" fill="#a8c8ea" fill-opacity=".85" stroke="#555" stroke-width="1.6"/><circle cx="10" cy="10" r="1.8" fill="#fff" fill-opacity=".8"/></svg><svg style="position:absolute;left:985px;top:80px;overflow:visible" width="23" height="22" viewBox="0 0 23 22"><path d="M.5,.5 L11,.5 L15.5,5 L15.5,19.5 L.5,19.5Z" fill="url(#gPage)" stroke="#8a8a88" stroke-width=".9"/><path d="M3,4.0h8" stroke="#b0b0ae" stroke-width=".7"/><path d="M3,6.2h8" stroke="#b0b0ae" stroke-width=".7"/><path d="M3,8.4h8" stroke="#b0b0ae" stroke-width=".7"/><path d="M3,10.600000000000001h8" stroke="#b0b0ae" stroke-width=".7"/><path d="M3,12.8h8" stroke="#b0b0ae" stroke-width=".7"/><path d="M3,15.0h8" stroke="#b0b0ae" stroke-width=".7"/><path d="M3,17.200000000000003h8" stroke="#b0b0ae" stroke-width=".7"/><path d="M15,15 L21.5,21" stroke="#000" stroke-width="3"/><circle cx="11.5" cy="11.5" r="5.5" fill="#a8c8ea" fill-opacity=".85" stroke="#555" stroke-width="1.6"/><circle cx="10" cy="10" r="1.8" fill="#fff" fill-opacity=".8"/><path d="M12,13 L22,2" stroke="#9a6a10" stroke-width="3"/><path d="M12,13 L22,2" stroke="#f6b840" stroke-width="1.8"/></svg><div class="ui" style="position:absolute;left:415.5px;top:103px;width:120px;text-align:center;color:#111">New</div><div class="ui" style="position:absolute;left:457.5px;top:103px;width:120px;text-align:center;color:#111">Open</div><div class="ui" style="position:absolute;left:529.5px;top:103px;width:120px;text-align:center;color:#111">Save</div><div class="ui" style="position:absolute;left:590.5px;top:103px;width:120px;text-align:center;color:#111">Print...</div><div class="ui" style="position:absolute;left:651.5px;top:103px;width:120px;text-align:center;color:#111">Undo</div><div class="ui" style="position:absolute;left:696px;top:103px;width:120px;text-align:center;color:#bbb6b0">Redo</div><div class="ui" style="position:absolute;left:747px;top:103px;width:120px;text-align:center;color:#bbb6b0">Cut</div><div class="ui" style="position:absolute;left:788px;top:103px;width:120px;text-align:center;color:#bbb6b0">Copy</div><div class="ui" style="position:absolute;left:833px;top:103px;width:120px;text-align:center;color:#111">Paste</div><div class="ui" style="position:absolute;left:886.5px;top:103px;width:120px;text-align:center;color:#111">Find</div><div class="ui" style="position:absolute;left:936px;top:103px;width:120px;text-align:center;color:#111">Replace</div><div style="position:absolute;left:617px;top:84px;width:1px;height:31px;background:#cdc6bd"></div><div style="position:absolute;left:682px;top:84px;width:1px;height:31px;background:#cdc6bd"></div><div style="position:absolute;left:784px;top:84px;width:1px;height:31px;background:#cdc6bd"></div><div style="position:absolute;left:922px;top:84px;width:1px;height:31px;background:#cdc6bd"></div><div style="position:absolute;left:456px;top:127px;width:820px;height:28px;background:#edeae6"></div><div style="position:absolute;left:455px;top:155px;width:821px;height:721px;background:#fff;border-top:1px solid #7d7466;border-left:1px solid #a69c90;border-bottom:1px solid #a69c90"></div><div style="position:absolute;left:457px;top:156px;width:817px;height:719px;border:1px solid #b4aa9e;border-right:2px solid #a69c90"></div><div style="position:absolute;left:598px;top:130px;width:110px;height:26px;background:linear-gradient(#e8e4de,#dcd7d0);border:1px solid #a89e92;border-bottom:none;border-radius:3px 3px 0 0"></div><div style="position:absolute;left:456px;top:127px;width:142px;height:29px;background:#efebe7;border:1px solid #a89e92;border-top:1px solid #c87840;border-bottom:none;border-radius:3px 3px 0 0"></div><svg style="position:absolute;left:460px;top:134px;overflow:visible" width="16" height="17" viewBox="0 0 16 17"><rect x=".5" y=".5" width="14" height="15" fill="#f8f8f6" stroke="#7a7a78"/><path d="M7,13 L11,9 L15,13 L11,17Z" fill="#b8b8b6" stroke="#6a6a68" stroke-width=".7"/></svg><svg style="position:absolute;left:601px;top:135px;overflow:visible" width="15" height="16" viewBox="0 0 15 16"><rect x=".5" y=".5" width="14" height="15" fill="#f8f8f6" stroke="#7a7a78"/><path d="M3,3.5h9" stroke="#aaa" stroke-width=".7"/><path d="M3,5.5h9" stroke="#aaa" stroke-width=".7"/><path d="M3,7.5h9" stroke="#aaa" stroke-width=".7"/><path d="M3,9.5h9" stroke="#aaa" stroke-width=".7"/><path d="M3,11.5h9" stroke="#aaa" stroke-width=".7"/><path d="M3,13.5h9" stroke="#aaa" stroke-width=".7"/></svg><div class="ui" style="position:absolute;left:480px;top:134px;">grabhome.sh</div><div class="ui" style="position:absolute;left:620px;top:134px;">*.bashrc</div><svg style="position:absolute;left:578px;top:137px;overflow:visible" width="11" height="10" viewBox="0 0 11 10"><rect x="0" y="0" width="11" height="10" rx="1" fill="#f07a30"/><rect x=".5" y=".5" width="10" height="9" rx="1" fill="none" stroke="#d8601a"/><path d="M3,2.5 L8,7.5 M8,2.5 L3,7.5" stroke="#fff" stroke-width="1.8"/></svg><svg style="position:absolute;left:689px;top:137px;overflow:visible" width="11" height="10" viewBox="0 0 11 10"><rect x="0" y="0" width="11" height="10" rx="1" fill="#f07a30"/><rect x=".5" y=".5" width="10" height="9" rx="1" fill="none" stroke="#d8601a"/><path d="M3,2.5 L8,7.5 M8,2.5 L3,7.5" stroke="#fff" stroke-width="1.8"/></svg><div class="mono" style="position:absolute;left:460px;top:159px;color:#000"><span style="color:#0000ff;">#!/bin/bash</span>
<span style="color:#a52a2a;font-weight:bold">case</span> <span style="color:#ff00ff;">&quot;$1&quot;</span> <span style="color:#a52a2a;font-weight:bold">in</span>
        bin<span style="color:#2e8b57;">)</span>
                <span style="color:#a52a2a;font-weight:bold">echo</span> <span style="color:#ff00ff;">&quot;You chose bin!&quot;</span>
                <span style="color:#2e8b57;">;;</span>
        etc<span style="color:#2e8b57;">)</span>
                <span style="color:#a52a2a;font-weight:bold">echo</span> <span style="color:#ff00ff;">&quot;You chose etc!&quot;</span>
                <span style="color:#2e8b57;">;;</span>
        bin+etc<span style="color:#2e8b57;">)</span>
                <span style="color:#a52a2a;font-weight:bold">echo</span> <span style="color:#ff00ff;">&quot;You chose bin+etc!&quot;</span>
                <span style="color:#2e8b57;">;;</span>
        docs<span style="color:#2e8b57;">)</span>
                <span style="color:#a52a2a;font-weight:bold">echo</span> <span style="color:#ff00ff;">&quot;You chose docs!&quot;</span>
                <span style="color:#2e8b57;">;;</span>
        all<span style="color:#2e8b57;">)</span>
                <span style="color:#a52a2a;font-weight:bold">echo</span> <span style="color:#ff00ff;">&quot;You chose all!&quot;</span></div><div style="position:absolute;left:456px;top:390px;width:820px;height:12px;background:linear-gradient(rgba(0,0,0,0),rgba(0,0,0,0.2))"></div><div style="position:absolute;left:462px;top:402px;width:818px;height:9px;background:rgba(155,8,18,0.79)"></div><div style="position:absolute;left:462px;top:411px;width:818px;height:12px;background:rgba(104,3,3,0.79)"></div><div style="position:absolute;left:462px;top:423px;width:4px;height:571px;background:rgba(117,25,25,0.79)"></div><div style="position:absolute;left:1275px;top:402px;width:5px;height:596px;background:linear-gradient(90deg,#8a2a2a,#6c1a1a)"></div><div style="position:absolute;left:462px;top:994px;width:813px;height:4px;background:#7a2222"></div><svg style="position:absolute;left:468px;top:405px;overflow:visible" width="15" height="13" viewBox="0 0 15 13"><rect x=".5" y=".5" width="14" height="12" rx="1.5" fill="url(#gBez)" stroke="#4a4844"/><rect x="2.2" y="2.2" width="10.6" height="7.6" fill="url(#gScr2)" stroke="#141614" stroke-width=".6"/><path d="M3.5,8.2h2M6,8.5h1" stroke="#c8ccc8" stroke-width=".9"/></svg><div class="ui" style="position:absolute;left:670px;top:405px;font-weight:bold;color:#fff;letter-spacing:0.4px;text-shadow:1px 1px 1px rgba(40,0,0,.6)">frosty@prometheus: ~/src/bzr/106726/doc/developers</div><svg style="position:absolute;left:1206px;top:404px;overflow:visible" width="19" height="15" viewBox="0 0 19 15"><rect x=".5" y=".5" width="18" height="14" rx="1.5" fill="#e2e0de" stroke="#555"/><rect x="1" y="7.5" width="17" height="6.5" fill="#d6d4d2"/><rect x="5.5" y="9.5" width="7" height="2" fill="#555"/></svg><svg style="position:absolute;left:1230px;top:404px;overflow:visible" width="19" height="15" viewBox="0 0 19 15"><rect x=".5" y=".5" width="18" height="14" rx="1.5" fill="#e2e0de" stroke="#555"/><rect x="1" y="7.5" width="17" height="6.5" fill="#d6d4d2"/><rect x="5" y="3.5" width="8" height="7.5" fill="none" stroke="#555" stroke-width="1.2"/><rect x="5" y="3" width="8" height="1.6" fill="#555"/></svg><svg style="position:absolute;left:1254px;top:404px;overflow:visible" width="19" height="15" viewBox="0 0 19 15"><rect x=".5" y=".5" width="18" height="14" rx="1.5" fill="#e2e0de" stroke="#555"/><rect x="1" y="7.5" width="17" height="6.5" fill="#d6d4d2"/><path d="M5.5,3.5 L12.5,10.5 M12.5,3.5 L5.5,10.5" stroke="#555" stroke-width="2"/></svg><div style="position:absolute;left:466px;top:423px;width:809px;height:25px;background:linear-gradient(#f2efeb,#e6e2dc)"></div><div class="ui" style="position:absolute;left:473px;top:427px;"><u>F</u>ile</div><div class="ui" style="position:absolute;left:509px;top:427px;"><u>E</u>dit</div><div class="ui" style="position:absolute;left:545px;top:427px;"><u>V</u>iew</div><div class="ui" style="position:absolute;left:588px;top:427px;"><u>T</u>erminal</div><div class="ui" style="position:absolute;left:655px;top:427px;">Ta<u>b</u>s</div><div class="ui" style="position:absolute;left:697px;top:427px;"><u>H</u>elp</div><div style="position:absolute;left:466px;top:448px;width:794px;height:546px;background:#000"></div><div style="position:absolute;left:1260px;top:448px;width:15px;height:546px;background:#d8d2ca"></div><div style="position:absolute;left:1261px;top:449px;width:13px;height:14px;background:#eeece8;border:1px solid #b4aa9e;border-radius:3px 3px 0 0"></div><svg style="position:absolute;left:1263px;top:453px;overflow:visible" width="9" height="5" viewBox="0 0 9 5"><path d="M0,5 L9,5 L4.5,0Z" fill="#a8a49e"/></svg><div style="position:absolute;left:1261px;top:463px;width:13px;height:517px;background:linear-gradient(90deg,#f4f2ee,#dcd6ce);border:1px solid #b4aa9e;border-radius:2px"></div><div style="position:absolute;left:1264px;top:711px;width:1px;height:1px;background:#fff;box-shadow:1px 1px 0 #c8c2ba"></div><div style="position:absolute;left:1267px;top:712px;width:1px;height:1px;background:#fff;box-shadow:1px 1px 0 #c8c2ba"></div><div style="position:absolute;left:1264px;top:714px;width:1px;height:1px;background:#fff;box-shadow:1px 1px 0 #c8c2ba"></div><div style="position:absolute;left:1267px;top:715px;width:1px;height:1px;background:#fff;box-shadow:1px 1px 0 #c8c2ba"></div><div style="position:absolute;left:1264px;top:717px;width:1px;height:1px;background:#fff;box-shadow:1px 1px 0 #c8c2ba"></div><div style="position:absolute;left:1267px;top:718px;width:1px;height:1px;background:#fff;box-shadow:1px 1px 0 #c8c2ba"></div><div style="position:absolute;left:1264px;top:720px;width:1px;height:1px;background:#fff;box-shadow:1px 1px 0 #c8c2ba"></div><div style="position:absolute;left:1267px;top:721px;width:1px;height:1px;background:#fff;box-shadow:1px 1px 0 #c8c2ba"></div><div style="position:absolute;left:1264px;top:723px;width:1px;height:1px;background:#fff;box-shadow:1px 1px 0 #c8c2ba"></div><div style="position:absolute;left:1267px;top:724px;width:1px;height:1px;background:#fff;box-shadow:1px 1px 0 #c8c2ba"></div><div style="position:absolute;left:1264px;top:726px;width:1px;height:1px;background:#fff;box-shadow:1px 1px 0 #c8c2ba"></div><div style="position:absolute;left:1267px;top:727px;width:1px;height:1px;background:#fff;box-shadow:1px 1px 0 #c8c2ba"></div><div style="position:absolute;left:1261px;top:980px;width:13px;height:14px;background:#eeece8;border:1px solid #b4aa9e;border-radius:0 0 3px 3px"></div><svg style="position:absolute;left:1263px;top:985px;overflow:visible" width="9" height="5" viewBox="0 0 9 5"><path d="M0,0 L9,0 L4.5,5Z" fill="#a8a49e"/></svg><div class="mono" style="position:absolute;left:467px;top:450px;color:#00e800">
Running the Test Suite
======================

Currently, bzr selftest is used to invoke tests.
You can provide a pattern argument to run a subset. For example,
to run just the blackbox tests, run::

  ./bzr selftest -v blackbox

To skip a particular test (or set of tests), use the --exclude option
(shorthand -x) like so::

  ./bzr selftest -v -x blackbox

To list tests without running them, use the --list-only option like so::

  ./bzr selftest --list-only

This option can be combined with other selftest options (like -x) and
filter patterns to understand their effect.


Writing Tests
=============

In general tests should be placed in a file named test_FOO.py where
FOO is the logical thing under test. That file should be placed in the
tests subdirectory under the package being tested.

For example, tests for merge3 in bzrlib belong in bzrlib/tests/test_merge3.py.
:</div><div style="position:absolute;left:475px;top:976px;width:8px;height:17px;background:#00ff00"></div><div style="position:absolute;left:0px;top:998px;width:1280px;height:1px;background:#4a3c3a"></div><div style="position:absolute;left:0px;top:999px;width:1280px;height:25px;background:linear-gradient(#ffffff,#f1eeea 15%,#e8e4df)"></div><div style="position:absolute;left:1px;top:1001px;width:22px;height:22px;background:linear-gradient(#f6f4f2,#e0dcd6);border:1px solid #a69c90;border-radius:3px"></div><svg style="position:absolute;left:5px;top:1006px;overflow:visible" width="14" height="11" viewBox="0 0 14 11"><rect x=".5" y=".5" width="13" height="10" fill="#8a3a10" stroke="#333"/><rect x="2" y="2" width="10" height="7" fill="#c2602a"/><rect x="3" y="3" width="3" height="3" fill="#f0e0d0"/></svg><div style="position:absolute;left:27px;top:1002px;width:1px;height:1px;background:#fff;box-shadow:1px 1px 0 #c8c2ba"></div><div style="position:absolute;left:30px;top:1003px;width:1px;height:1px;background:#fff;box-shadow:1px 1px 0 #c8c2ba"></div><div style="position:absolute;left:27px;top:1005px;width:1px;height:1px;background:#fff;box-shadow:1px 1px 0 #c8c2ba"></div><div style="position:absolute;left:30px;top:1006px;width:1px;height:1px;background:#fff;box-shadow:1px 1px 0 #c8c2ba"></div><div style="position:absolute;left:27px;top:1008px;width:1px;height:1px;background:#fff;box-shadow:1px 1px 0 #c8c2ba"></div><div style="position:absolute;left:30px;top:1009px;width:1px;height:1px;background:#fff;box-shadow:1px 1px 0 #c8c2ba"></div><div style="position:absolute;left:27px;top:1011px;width:1px;height:1px;background:#fff;box-shadow:1px 1px 0 #c8c2ba"></div><div style="position:absolute;left:30px;top:1012px;width:1px;height:1px;background:#fff;box-shadow:1px 1px 0 #c8c2ba"></div><div style="position:absolute;left:27px;top:1014px;width:1px;height:1px;background:#fff;box-shadow:1px 1px 0 #c8c2ba"></div><div style="position:absolute;left:30px;top:1015px;width:1px;height:1px;background:#fff;box-shadow:1px 1px 0 #c8c2ba"></div><div style="position:absolute;left:27px;top:1017px;width:1px;height:1px;background:#fff;box-shadow:1px 1px 0 #c8c2ba"></div><div style="position:absolute;left:30px;top:1018px;width:1px;height:1px;background:#fff;box-shadow:1px 1px 0 #c8c2ba"></div><div style="position:absolute;left:35px;top:1001px;width:168px;height:22px;background:linear-gradient(#f8f6f4,#e4e0da);border:1px solid #a69c90;border-radius:3px"></div><svg style="position:absolute;left:42px;top:1004px;overflow:visible" width="16" height="16" viewBox="0 0 16 16"><path d="M2,1.5 L14,1.5 L15.5,7 L15.5,15.5 L.5,15.5 L.5,7Z" fill="#f4f4f2" stroke="#8c8c8a"/><rect x="1.5" y="9" width="13" height="5.5" fill="#8a8a88"/><path d="M3,10.8h3M7.5,10.8h2M11,10.8h2M3,12.8h3M7.5,12.8h2M11,12.8h2" stroke="#d8d8d6" stroke-width="1"/><path d="M7.5,10.8h2M7.5,12.8h2" stroke="#fff" stroke-width="1.2"/></svg><div class="ui" style="position:absolute;left:63px;top:1004px;">Desktop - File Brow...</div><div style="position:absolute;left:205px;top:1001px;width:168px;height:22px;background:linear-gradient(#f8f6f4,#e4e0da);border:1px solid #a69c90;border-radius:3px"></div><svg style="position:absolute;left:211px;top:1003px;overflow:visible" width="16" height="16" viewBox="0 0 21 21"><circle cx="11.2" cy="9.8" r="8.8" fill="url(#gFfBlue)"/><path d="M4,2.2 C2,5 .5,8 .5,11 A10,10 0 0 0 20.5,11 C20.5,7 19,4 17,2.2 C18,6 18,9 16.5,12 C15,15 12,16.5 9,15.5 C11.5,14.5 13.5,13.5 14.5,12.5 C12,13 9,12.2 8,10 C7,8 8.5,6.3 10.5,6.5 C9.8,5.2 8.8,4.6 7.4,4.9 C6.4,3.8 5.4,2.8 4,2.2Z" fill="url(#gFfOr)"/><path d="M17,2.2 C20,5 21,8.5 20.6,12 C20,16 17,19 13.5,20.2 C16.8,17.5 18.6,14.5 18.6,11 C18.6,8 18.2,5 17,2.2Z" fill="#ffc61a"/></svg><div class="ui" style="position:absolute;left:233px;top:1004px;">[API docs for “bzrli...</div><div style="position:absolute;left:377px;top:1001px;width:166px;height:22px;background:linear-gradient(#f8f6f4,#e4e0da);border:1px solid #a69c90;border-radius:3px"></div><svg style="position:absolute;left:383px;top:1003px;overflow:visible" width="16" height="16" viewBox="0 0 21 21"><circle cx="11.2" cy="9.8" r="8.8" fill="url(#gFfBlue)"/><path d="M4,2.2 C2,5 .5,8 .5,11 A10,10 0 0 0 20.5,11 C20.5,7 19,4 17,2.2 C18,6 18,9 16.5,12 C15,15 12,16.5 9,15.5 C11.5,14.5 13.5,13.5 14.5,12.5 C12,13 9,12.2 8,10 C7,8 8.5,6.3 10.5,6.5 C9.8,5.2 8.8,4.6 7.4,4.9 C6.4,3.8 5.4,2.8 4,2.2Z" fill="url(#gFfOr)"/><path d="M17,2.2 C20,5 21,8.5 20.6,12 C20,16 17,19 13.5,20.2 C16.8,17.5 18.6,14.5 18.6,11 C18.6,8 18.2,5 17,2.2Z" fill="#ffc61a"/></svg><div class="ui" style="position:absolute;left:405px;top:1004px;">[Amazon.co.uk: If ...</div><div style="position:absolute;left:548px;top:1001px;width:167px;height:22px;background:linear-gradient(#f8f6f4,#e4e0da);border:1px solid #a69c90;border-radius:3px"></div><svg style="position:absolute;left:555px;top:1005px;overflow:visible" width="15" height="13" viewBox="0 0 15 13"><rect x=".5" y=".5" width="14" height="12" rx="1.5" fill="url(#gBez)" stroke="#4a4844"/><rect x="2.2" y="2.2" width="10.6" height="7.6" fill="url(#gScr2)" stroke="#141614" stroke-width=".6"/><path d="M3.5,8.2h2M6,8.5h1" stroke="#c8ccc8" stroke-width=".9"/></svg><div class="ui" style="position:absolute;left:576px;top:1004px;">frosty@promethe...</div><div style="position:absolute;left:718px;top:1001px;width:168px;height:22px;background:linear-gradient(#f8f6f4,#e4e0da);border:1px solid #a69c90;border-radius:3px"></div><svg style="position:absolute;left:724px;top:1003px;overflow:visible" width="16" height="17" viewBox="0 0 16 17"><rect x="1.5" y="2.5" width="12" height="14" fill="#fbfbf9" stroke="#8a8a88"/><circle cx="3.0" cy="2.5" r="1.2" fill="#f4d040" stroke="#a88010" stroke-width=".6"/><circle cx="5.2" cy="2.5" r="1.2" fill="#f4d040" stroke="#a88010" stroke-width=".6"/><circle cx="7.4" cy="2.5" r="1.2" fill="#f4d040" stroke="#a88010" stroke-width=".6"/><circle cx="9.600000000000001" cy="2.5" r="1.2" fill="#f4d040" stroke="#a88010" stroke-width=".6"/><circle cx="11.8" cy="2.5" r="1.2" fill="#f4d040" stroke="#a88010" stroke-width=".6"/><path d="M3.5,6h8" stroke="#9a9a98" stroke-width=".7"/><path d="M3.5,8h8" stroke="#9a9a98" stroke-width=".7"/><path d="M3.5,10h8" stroke="#9a9a98" stroke-width=".7"/><path d="M3.5,12h8" stroke="#9a9a98" stroke-width=".7"/><path d="M3.5,14h8" stroke="#9a9a98" stroke-width=".7"/><path d="M6,14 L15,5" stroke="#7a4a08" stroke-width="3.6" stroke-linecap="round"/><path d="M6.3,13.7 L15,5" stroke="#f5a828" stroke-width="2.2"/><path d="M4.6,15.6 L5.6,12.6 L7.5,14.4Z" fill="#222"/></svg><div class="ui" style="position:absolute;left:746px;top:1004px;">grabhome.sh (~) ...</div><div style="position:absolute;left:889px;top:1001px;width:168px;height:22px;background:linear-gradient(#f8f6f4,#e4e0da);border:1px solid #a69c90;border-radius:3px"></div><svg style="position:absolute;left:896px;top:1005px;overflow:visible" width="15" height="13" viewBox="0 0 15 13"><rect x=".5" y=".5" width="14" height="12" rx="1.5" fill="url(#gBez)" stroke="#4a4844"/><rect x="2.2" y="2.2" width="10.6" height="7.6" fill="url(#gScr2)" stroke="#141614" stroke-width=".6"/><path d="M3.5,8.2h2M6,8.5h1" stroke="#c8ccc8" stroke-width=".9"/></svg><div class="ui" style="position:absolute;left:917px;top:1004px;">frosty@promethe...</div><div style="position:absolute;left:1061px;top:1001px;width:167px;height:22px;background:linear-gradient(#d6d0c8,#ddd8d0);border:1px solid #a69c90;border-radius:3px"></div><svg style="position:absolute;left:1068px;top:1005px;overflow:visible" width="15" height="13" viewBox="0 0 15 13"><rect x=".5" y=".5" width="14" height="12" rx="1.5" fill="url(#gBez)" stroke="#4a4844"/><rect x="2.2" y="2.2" width="10.6" height="7.6" fill="url(#gScr2)" stroke="#141614" stroke-width=".6"/><path d="M3.5,8.2h2M6,8.5h1" stroke="#c8ccc8" stroke-width=".9"/></svg><div class="ui" style="position:absolute;left:1089px;top:1004px;">frosty@promethe...</div><svg style="position:absolute;left:1232px;top:1001px;overflow:visible" width="25" height="21" viewBox="0 0 25 21"><rect x="0" y="0" width="25" height="21" fill="#b8aea2"/><path d="M12.5,0v21M0,10.5h25" stroke="#f4f2ee" stroke-width="1"/><rect x="1" y="1" width="11" height="9" fill="#d8cfc4"/><rect x="2" y="2" width="5" height="3" fill="#e9641a"/><rect x="2" y="5.5" width="3" height="3.5" fill="#e9641a"/><rect x="5.5" y="5.5" width="5" height="1.5" fill="#e9641a"/></svg><svg style="position:absolute;left:1261px;top:1002px;overflow:visible" width="19" height="21" viewBox="0 0 19 21"><path d="M2,5 L17,5 L15.5,20.5 L3.5,20.5Z" fill="#f08a30" stroke="#c8621a" stroke-width=".8"/><ellipse cx="9.5" cy="4.5" rx="8" ry="3" fill="#e8e8e6" stroke="#9a9a98" stroke-width=".8"/><circle cx="9.5" cy="13" r="3" fill="none" stroke="#fff" stroke-width="1.2"/></svg></div></body></html>
